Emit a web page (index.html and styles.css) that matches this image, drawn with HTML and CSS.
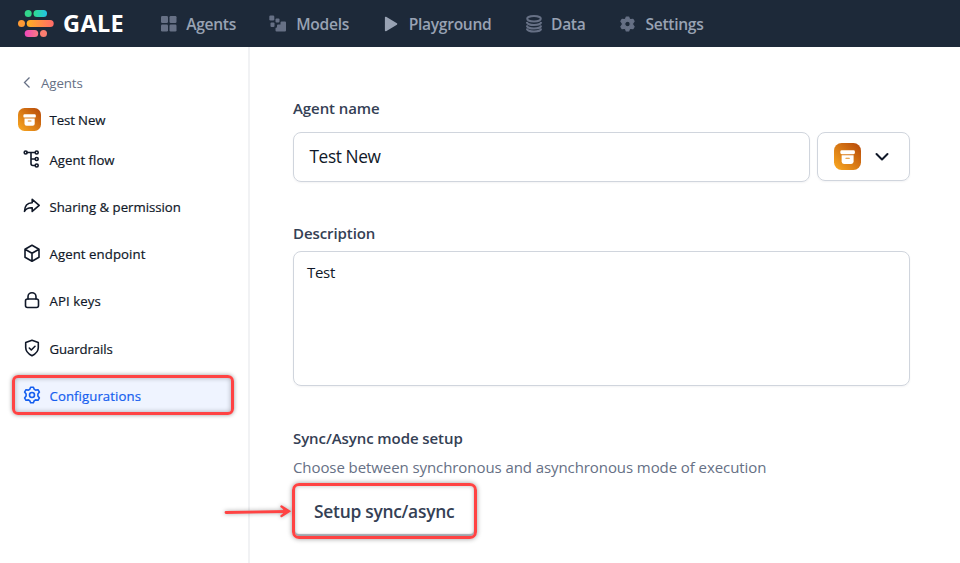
FILE: index.html
```
<!DOCTYPE html>
<html lang="en">
<head>
<meta charset="utf-8">
<title>GALE - Configurations</title>
<link rel="stylesheet" href="styles.css">
</head>
<body>
<svg width="0" height="0" class="defs">
  <defs>
    <linearGradient id="amber" x1="0" y1="1" x2="1" y2="0"><stop offset="0" stop-color="#fbab22"/><stop offset="1" stop-color="#b54708"/></linearGradient>
    <linearGradient id="teal" x1="0" x2="1"><stop offset="0" stop-color="#2fdc8d"/><stop offset="1" stop-color="#22c5e8"/></linearGradient>
    <linearGradient id="sun" x1="0" x2="1"><stop offset="0" stop-color="#fdb022"/><stop offset="1" stop-color="#ff6a6a"/></linearGradient>
    <linearGradient id="pink" x1="0" x2="1"><stop offset="0" stop-color="#ee46bc"/><stop offset="1" stop-color="#fa7a80"/></linearGradient>
    <symbol id="archive" viewBox="0 0 23 23">
      <rect width="23" height="23" rx="6.5" fill="url(#amber)"/>
      <rect x="5.4" y="6.2" width="12.4" height="3.4" rx="1.2" fill="#fff"/>
      <path d="M6.5 10.4h10.2v5.4a2 2 0 0 1-2 2H8.500a2 2 0 0 1-2-2z" fill="#fff"/>
      <path d="M10.200 13h2.800" stroke="#e18a20" stroke-width="1" stroke-linecap="round"/>
    </symbol>
  </defs>
</svg>
<header class="topbar">
  <div class="brand">
    <svg width="36" height="28" viewBox="0 0 36 28">
      <circle cx="10.200" cy="3.500" r="3.500" fill="#32d58b"/><rect x="15.500" y="0" width="13.500" height="7" rx="3.500" fill="url(#teal)"/>
      <circle cx="3.500" cy="13.500" r="3.500" fill="#fd9a35"/><rect x="8.700" y="10" width="27" height="7" rx="3.500" fill="url(#sun)"/>
      <rect x="6.700" y="20" width="13.500" height="7" rx="3.500" fill="url(#pink)"/><circle cx="25.500" cy="23.500" r="3.500" fill="#fb7d70"/>
    </svg>
    <span class="brand-name">GALE</span>
  </div>
  <nav class="nav">
    <a class="n-agents"><svg width="16" height="16" viewBox="0 0 16 16" fill="#667085"><rect x="0" y="0" width="7" height="7" rx="1.200"/><rect x="8.500" y="0" width="7" height="7" rx="1.200"/><rect x="0" y="8.500" width="7" height="7" rx="1.200"/><rect x="8.500" y="8.500" width="7" height="7" rx="1.200"/></svg><span>Agents</span></a>
    <a class="n-models"><svg width="18" height="18" viewBox="0 0 18 18" fill="#667085"><rect x="0.300" y="0.500" width="5" height="5" rx="1.200"/><rect x="6.500" y="3.500" width="4" height="4" rx="1"/><rect x="1.500" y="7.500" width="4" height="4.500" rx="1"/><path d="M12.500 6.500H16a1 1 0 0 1 1 1V15.500a1 1 0 0 1-1 1H7.500a1 1 0 0 1-1-1V13.500a1 1 0 0 1 1-1H8V10.500a1 1 0 0 1 1-1h2.500v-2a1 1 0 0 1 1-1z"/></svg><span>Models</span></a>
    <a class="n-play"><svg width="14" height="16" viewBox="0 0 14 16"><path d="M1.700 1.500v13L12.500 8z" fill="#98a2b3" stroke="#98a2b3" stroke-width="1.600" stroke-linejoin="round"/></svg><span>Playground</span></a>
    <a class="n-data"><svg width="17" height="18" viewBox="0 0 17 18" fill="none" stroke="#667085" stroke-width="2"><ellipse cx="8" cy="3.800" rx="6.800" ry="2.700"/><path d="M.8 7c.6 4 13.800 4 14.400 0M.8 10.500c.6 4 13.800 4 14.400 0M.8 13.500c.6 4 13.800 4 14.400 0"/></svg><span>Data</span></a>
    <a class="n-settings"><svg width="16" height="16" viewBox="0 0 16 16"><path fill="#667085" stroke="#667085" stroke-width="1.200" stroke-linejoin="round" fill-rule="evenodd" d="M6.300 1h2.400l.7 2 1.300.7 2.200-.4 1.200 2.100L12.700 7v2l1.400 1.600-1.200 2.100-2.200-.4-1.300.7-.7 2H6.300l-.7-2-1.300-.7-2.200.4L.9 10.600 2.300 9V7L.9 5.400l1.200-2.100 2.200.4L5.600 3zM7.500 5.200a2.800 2.800 0 1 0 0 5.600 2.800 2.800 0 0 0 0-5.600z"/></svg><span>Settings</span></a>
  </nav>
</header>
<div class="body">
  <aside class="side">
    <a class="back"><svg width="10" height="12" viewBox="0 0 10 12"><path d="M7.500 0.500L2.500 5.500l5 5" fill="none" stroke="#667085" stroke-width="1.300"/></svg><span>Agents</span></a>
    <div class="agent"><svg width="23" height="23"><use href="#archive"/></svg><span>Test New</span></div>
    <ul class="menu">
      <li><svg viewBox="0 0 18 18"><path d="M4 2.500h8M8 2.500v11q0 2 2 2h2M8 9h4"/><circle cx="2.700" cy="2.500" r="1.500"/><circle cx="13.700" cy="2.500" r="1.500"/><circle cx="13.700" cy="9" r="1.500"/><circle cx="13.700" cy="15.500" r="1.500"/></svg><span>Agent flow</span></li>
      <li><svg viewBox="0 0 18 18"><path d="M9.200 2.300l7 6-7 6.100v-3.600C5.400 10.600 3 11.700 1.500 14.400 1.600 9.300 4.200 6 9.200 5.800z"/></svg><span>Sharing &amp; permission</span></li>
      <li><svg viewBox="0 0 18 18"><path d="M9 1.300l7 4v8l-7 4-7-4v-8zM2 5.300l7 4 7-4M9 9.300v8"/></svg><span class="t-end">Agent endpoint</span></li>
      <li><svg viewBox="0 0 18 18"><rect x="2.500" y="8" width="13" height="8.500" rx="2"/><path d="M5 8V5.700a4 4 0 0 1 8 0V8"/></svg><span class="t-end">API keys</span></li>
      <li><svg viewBox="0 0 18 18"><path d="M9 1.300l6.300 2.200v5q0 5-6.300 8.200Q2.700 13.500 2.700 8.500v-5z"/><path d="M6.300 9l2 2 3.700-3.700"/></svg><span class="t-guard">Guardrails</span></li>
      <li class="active"><svg viewBox="0 0 18 18"><path d="M7.600 1.200h2.800l.8 2.100 1.400.8 2.400-.4 1.400 2.400L14.900 8v2l1.500 1.900-1.400 2.400-2.400-.4-1.400.8-.8 2.100H7.600l-.8-2.100-1.400-.8-2.400.4-1.400-2.400L3.100 10V8L1.600 6.100 3 3.700l2.400.4 1.400-.8z"/><circle cx="9" cy="9" r="2.500"/></svg><span class="t-end">Configurations</span><i class="mark"></i></li>
    </ul>
  </aside>
  <main class="main">
    <h2 class="l-name">Agent name</h2>
    <div class="name-row">
      <div class="input">Test New</div>
      <div class="picker"><svg width="27" height="27"><use href="#archive"/></svg><svg width="16" height="10" viewBox="0 0 16 10"><path d="M2.500 2l5.500 5.500L13.500 2" fill="none" stroke="#101828" stroke-width="2" stroke-linecap="round" stroke-linejoin="round"/></svg></div>
    </div>
    <h2 class="l-desc">Description</h2>
    <div class="area">Test</div>
    <h2 class="l-mode">Sync/Async mode setup</h2>
    <p class="hint">Choose between synchronous and asynchronous mode of execution</p>
    <div class="setup"><span>Setup sync/async</span>
      <svg class="arrow" width="72" height="20" viewBox="0 0 72 20" fill="none" stroke="#ff4343" stroke-width="2.800" stroke-linecap="round"><path d="M3 11.500L64 10.500"/><path d="M58.500 5.500L66 10.300 58.500 15" stroke-width="2.400"/><path d="M58.500 5.500L67 10.300 58.500 15 61 10.300z" fill="#ff4343" stroke="none"/></svg>
    </div>
  </main>
</div>
</body>
</html>
```
FILE: styles.css
```
* { box-sizing: border-box; }
body { margin: 0; width: 960px; height: 563px; overflow: hidden; background: #fff; font-family: "Open Sans", "Noto Sans", sans-serif; color: #101828; }
svg { display: block; flex: none; }
.defs { position: absolute; }
span { white-space: nowrap; }
h2, p, ul { margin: 0; padding: 0; }

.topbar { height: 47px; background: #1d2939; display: flex; align-items: center; padding-left: 18px; }
.brand { display: flex; align-items: center; gap: 9px; width: 143px; }
.brand-name { font: 700 23.500px/28px "Noto Sans", sans-serif; letter-spacing: .4px; margin-top: -1px; color: #fff; }
.nav { display: flex; font-size: 15.600px; font-weight: 600; letter-spacing: -.3px; line-height: 22px; color: #98a2b3; }
.nav a { display: flex; align-items: center; }
.nav span { margin-left: auto; }
.n-agents { width: 75px; margin-right: 33px; }
.n-models { width: 80px; margin-right: 35px; }
.n-play { width: 107.500px; margin-right: 34.500px; }
.n-data { width: 59.500px; margin-right: 34.500px; }
.n-settings { width: 83.500px; }

.body { display: flex; height: 516px; }
.side { width: 250px; border-right: 2px solid #f1f2f4; }
.back { display: flex; align-items: center; gap: 9px; height: 20px; margin: 26px 0 0 22px; font-size: 13.300px; letter-spacing: -.1px; color: #667085; }
.agent, .menu { font-size: 13.200px; font-weight: 500; -webkit-text-stroke: .2px currentColor; }
.agent { display: flex; align-items: center; gap: 8.500px; height: 24px; margin: 14px 0 11px 18px; }
.agent span { position: relative; top: 1px; letter-spacing: -.1px; }
.menu { list-style: none; }
.menu li { display: flex; align-items: center; gap: 8.500px; height: 35.200px; margin: 0 16px 12.100px 14px; padding-left: 9px; position: relative; }
.menu svg { width: 18px; height: 18px; margin-top: -2px; fill: none; stroke: #101828; stroke-width: 1.600; stroke-linejoin: round; stroke-linecap: round; }
.menu .t-end { letter-spacing: .08px; }
.menu .t-guard { letter-spacing: -.1px; }
.menu .active { background: #eff4ff; color: #155eef; }
.menu .active svg { stroke: #155eef; }
.mark { position: absolute; left: -2px; top: -3.500px; width: 222px; height: 40px; border: 3px solid #ff4343; border-radius: 6px; box-shadow: 0 0 4px rgba(0,0,0,.4), inset 0 0 5px rgba(0,0,0,.3); }

.main { padding-left: 43px; width: 660px; }
h2 { font-size: 15px; font-weight: 600; letter-spacing: -.08px; line-height: 20px; color: #344054; }
.l-name { margin-top: 51px; }
.name-row { display: flex; gap: 7px; margin-top: 14px; }
.input, .picker, .area { border: 1px solid #d0d5dd; border-radius: 8px; box-shadow: 0 1px 2px rgba(16,24,40,.05); }
.input { width: 517px; height: 50px; padding: 12px 15.500px; font-size: 17.300px; letter-spacing: -.4px; line-height: 24px; }
.picker { width: 93px; height: 49px; display: flex; align-items: center; gap: 12.500px; padding-left: 16px; }
.l-desc { margin-top: 41px; }
.area { width: 617px; height: 135px; margin-top: 8px; padding: 10px 13px; font-size: 15px; letter-spacing: -.3px; line-height: 20px; }
.l-mode { margin-top: 42px; }
.hint { margin-top: 9px; font-size: 15px; letter-spacing: -.08px; line-height: 20px; color: #667085; }
.setup { position: relative; width: 185px; height: 56px; margin: 6px 0 0 -1px; padding-left: 19px; border: 3px solid #ff4343; border-radius: 7px; font-size: 17.400px; font-weight: 600; letter-spacing: -.27px; line-height: 50px; color: #344054; box-shadow: 0 0 5px rgba(0,0,0,.4), inset 0 -2px 1px rgba(120,130,140,.65), inset 0 0 4px rgba(0,0,0,.25); }
.arrow { position: absolute; left: -72px; top: 15px; filter: drop-shadow(0 0 2px rgba(0,0,0,.35)); }
```
